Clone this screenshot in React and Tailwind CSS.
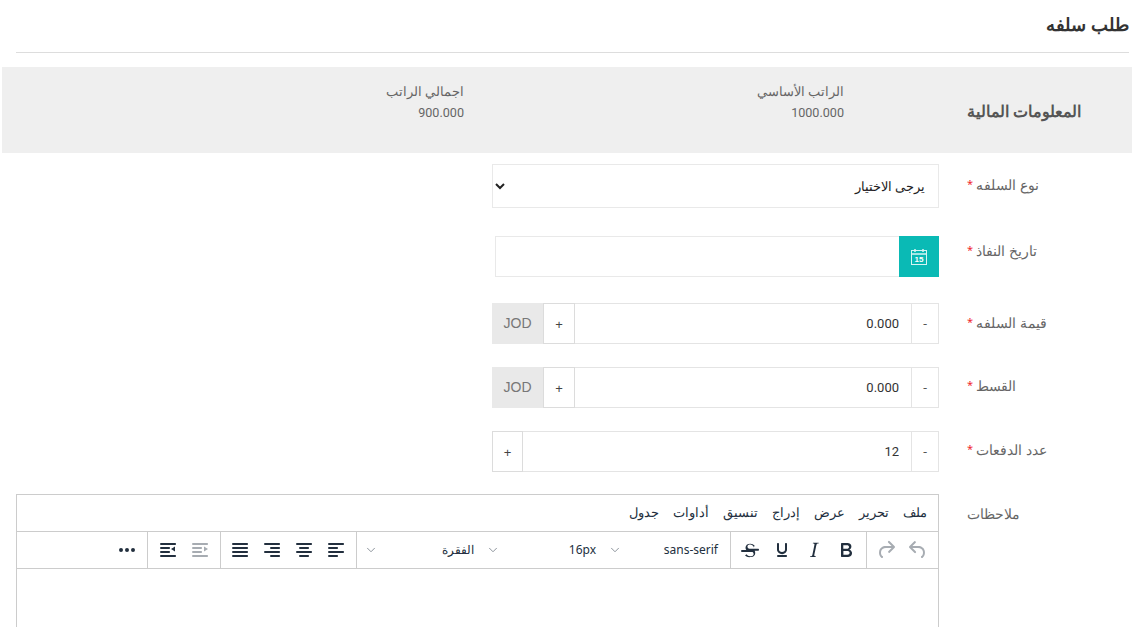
import { ChevronDown } from "lucide-react";

const FONT = "font-['Noto_Sans','Liberation_Sans',sans-serif]";

const ICONS = {
  undo: "M6.4 8H12c3.7 0 6.2 2 6.8 5.1.6 2.7-.4 5.6-2.3 6.8a1 1 0 0 1-1-1.8c1.1-.6 1.8-2.7 1.4-4.6-.5-2.1-2.1-3.5-4.9-3.5H6.4l3.3 3.3a1 1 0 1 1-1.4 1.4l-5-5a1 1 0 0 1 0-1.4l5-5a1 1 0 0 1 1.4 1.4L6.4 8z",
  redo: "M17.6 10H12c-2.8 0-4.4 1.4-4.9 3.5-.4 2 .3 4 1.4 4.6a1 1 0 1 1-1 1.8c-2-1.2-2.9-4.1-2.3-6.8.6-3 3-5.1 6.8-5.1h5.6l-3.3-3.3a1 1 0 1 1 1.4-1.4l5 5a1 1 0 0 1 0 1.4l-5 5a1 1 0 0 1-1.4-1.4l3.3-3.3z",
  bold: "M7.8 19c-.3 0-.5 0-.6-.2l-.2-.5V5.7c0-.2 0-.4.2-.5l.6-.2h5c1.5 0 2.7.3 3.5 1 .7.6 1.1 1.4 1.1 2.5a3 3 0 0 1-.6 1.9c-.4.6-1 1-1.6 1.2.4.1.9.3 1.3.6s.8.7 1 1.2c.4.4.5 1 .5 1.6 0 1.3-.4 2.3-1.3 3-.8.7-2.1 1-3.8 1H7.8zm5-8.3c.6 0 1.2-.1 1.6-.5.4-.3.6-.7.6-1.3 0-1.1-.8-1.7-2.3-1.7H9.3v3.5h3.4zm.5 6c.7 0 1.3-.1 1.7-.4.4-.4.6-.9.6-1.5s-.2-1-.7-1.4c-.4-.3-1-.4-2-.4H9.4v3.8h4z",
  italic: "M16.7 4.7l-.1.9h-.3c-.6 0-1 0-1.4.3-.3.3-.4.6-.5 1.1l-2.1 9.8v.6c0 .5.4.8 1.4.8h.2l-.2.8H8l.2-.8h.2c1.1 0 1.8-.5 2-1.5l2-9.8.1-.5c0-.6-.4-.8-1.4-.8h-.3l.2-.9h5.8z",
  underline: "M16 5c.6 0 1 .4 1 1v5.5a4 4 0 0 1-.4 1.8l-1 1.4a5.3 5.3 0 0 1-5.5 1 5 5 0 0 1-1.6-1c-.5-.4-.8-.9-1.1-1.4a4 4 0 0 1-.4-1.8V6c0-.6.4-1 1-1s1 .4 1 1v5.5c0 .3 0 .6.2 1l.6.7a3.3 3.3 0 0 0 2.2.8 3.4 3.4 0 0 0 2.2-.8c.3-.2.4-.5.6-.8l.2-.9V6c0-.6.4-1 1-1zM8 17h8c.6 0 1 .4 1 1s-.4 1-1 1H8a1 1 0 0 1 0-2z",
  strike: "M15.6 8.5c-.5-.7-1-1.1-1.3-1.3-.6-.4-1.3-.6-2-.6-2.7 0-2.8 1.7-2.8 2.1 0 1.2 1 1.8 2 2.1H20c.6 0 1 .4 1 1s-.4 1-1 1h-3.4c.5.7.6 1.5.6 2.2 0 1.4-.7 4.1-5 4.1A6.2 6.2 0 0 1 7 17.4l1.5-1.1c.4.6 1.6 2 3.7 2 1.6 0 2.5-.4 3-1 .3-.4.4-.9.4-1.4 0-.9-.5-1.500-1.200-1.900H4a1 1 0 0 1 0-2h4.300c-.5-.6-.8-1.300-.8-2.200 0-2.500 1.900-4.100 4.800-4.100 1.800 0 3.300.9 4.400 2.100l-1.100 1.700z",
  alignLeft: "M5 5h14c.6 0 1 .4 1 1s-.4 1-1 1H5a1 1 0 1 1 0-2zm0 4h8c.6 0 1 .4 1 1s-.4 1-1 1H5a1 1 0 1 1 0-2zm0 8h8c.6 0 1 .4 1 1s-.4 1-1 1H5a1 1 0 0 1 0-2zm0-4h14c.6 0 1 .4 1 1s-.4 1-1 1H5a1 1 0 0 1 0-2z",
  alignCenter: "M5 5h14c.6 0 1 .4 1 1s-.4 1-1 1H5a1 1 0 1 1 0-2zm3 4h8c.6 0 1 .4 1 1s-.4 1-1 1H8a1 1 0 1 1 0-2zm0 8h8c.6 0 1 .4 1 1s-.4 1-1 1H8a1 1 0 0 1 0-2zm-3-4h14c.6 0 1 .4 1 1s-.4 1-1 1H5a1 1 0 0 1 0-2z",
  alignRight: "M5 5h14c.6 0 1 .4 1 1s-.4 1-1 1H5a1 1 0 1 1 0-2zm6 4h8c.6 0 1 .4 1 1s-.4 1-1 1h-8a1 1 0 0 1 0-2zm0 8h8c.6 0 1 .4 1 1s-.4 1-1 1h-8a1 1 0 0 1 0-2zm-6-4h14c.6 0 1 .4 1 1s-.4 1-1 1H5a1 1 0 0 1 0-2z",
  justify: "M5 5h14c.6 0 1 .4 1 1s-.4 1-1 1H5a1 1 0 1 1 0-2zm0 4h14c.6 0 1 .4 1 1s-.4 1-1 1H5a1 1 0 1 1 0-2zm0 4h14c.6 0 1 .4 1 1s-.4 1-1 1H5a1 1 0 0 1 0-2zm0 4h14c.6 0 1 .4 1 1s-.4 1-1 1H5a1 1 0 0 1 0-2z",
  outdentRtl: "M5 5h14c.6 0 1 .4 1 1s-.4 1-1 1H5a1 1 0 1 1 0-2zm0 4h8c.6 0 1 .4 1 1s-.4 1-1 1H5a1 1 0 1 1 0-2zm0 4h8c.6 0 1 .4 1 1s-.4 1-1 1H5a1 1 0 0 1 0-2zm0 4h14c.6 0 1 .4 1 1s-.4 1-1 1H5a1 1 0 0 1 0-2zm10-6l4-2.500v5l-4-2.500z",
  indentRtl: "M5 5h14c.6 0 1 .4 1 1s-.4 1-1 1H5a1 1 0 1 1 0-2zm0 4h8c.6 0 1 .4 1 1s-.4 1-1 1H5a1 1 0 1 1 0-2zm0 4h8c.6 0 1 .4 1 1s-.4 1-1 1H5a1 1 0 0 1 0-2zm0 4h14c.6 0 1 .4 1 1s-.4 1-1 1H5a1 1 0 0 1 0-2zm15-6l-4-2.500v5l4-2.500z",
  more: "M6 10a2 2 0 1 1 0 4 2 2 0 0 1 0-4zm6 0a2 2 0 1 1 0 4 2 2 0 0 1 0-4zm6 0a2 2 0 1 1 0 4 2 2 0 0 1 0-4z",
};

const ToolIcon = ({ name, muted }) => (
  <button className="w-8 h-9 flex items-center justify-center shrink-0">
    <svg width="24" height="24" viewBox="0 0 24 24">
      <path d={ICONS[name]} fill={muted ? "#a7acb2" : "#222f3e"} />
    </svg>
  </button>
);

const ToolSelect = ({ label }) => (
  <div className="w-[122px] h-9 flex items-center justify-between pr-2 pl-1 text-[12px] text-[#222f3e]">
    <span>{label}</span>
    <ChevronDown size={14} strokeWidth={1.5} color="#7d858e" />
  </div>
);

const Label = ({ text, required, className }) => (
  <div className={`w-[165px] shrink-0 text-left text-[14.2px] text-[#666] ${className}`}>
    {text}
    {required && <span className="text-[#f0282d] text-[11px] align-[2px]"> *</span>}
  </div>
);

const NumberField = ({ value, suffix }) => (
  <div className="flex w-[447px] h-[41px] text-[#555]">
    <div className="w-[28px] border border-[#e4e4e4] flex items-center justify-center text-[13px]">-</div>
    <input
      readOnly
      value={value}
      className="flex-1 min-w-0 border-y border-y-[#e4e4e4] pt-[1px] px-3 text-[13px] text-[#333] text-right outline-none font-['Roboto',sans-serif]"
    />
    <div className={`border border-[#dcdcdc] flex items-center justify-center text-[13px] text-[#444] pt-0.5 font-['Liberation_Sans',sans-serif] ${suffix ? "w-[32px]" : "w-[31px]"}`}>+</div>
    {suffix && (
      <div className="w-[51px] bg-[#e9e9e9] flex items-center justify-center text-[14px] text-[#777] font-['Liberation_Sans',sans-serif]">
        {suffix}
      </div>
    )}
  </div>
);

function CalendarIcon() {
  return (
    <svg width="18" height="18" viewBox="0 0 18 18" fill="none" stroke="#d7f5f3" strokeWidth="1">
      <rect x="1.500" y="2.500" width="15" height="14" />
      <path d="M1.500 6h15M5 1v3M13 1v3" strokeWidth="1.500" />
      <text x="9" y="14" textAnchor="middle" fontSize="8" fontWeight="700" fill="#fff" stroke="none" fontFamily="Liberation Sans">15</text>
    </svg>
  );
}

export default function App() {
  return (
    <div dir="rtl" className={`w-[1132px] h-[627px] overflow-hidden bg-white ${FONT}`}>
      {/* Title */}
      <div className="mr-[3px] ml-4 h-[53px] border-b border-[#ddd] flex items-center">
        <h1 className="text-[18px] font-semibold text-[#333] pb-[3px]">طلب سلفه</h1>
      </div>

      {/* Financial info */}
      <div className="mt-[14px] ml-[2px] h-[86px] bg-[#efefef] flex">
        <div className="w-[165px] shrink-0 text-left text-[15.6px] font-semibold text-[#555] pt-[33px]">
          المعلومات المالية
        </div>
        <div className="w-[123px] shrink-0" />
        <div className="w-[380px] shrink-0 pt-[14px] text-[12.5px] text-[#666] leading-[21px]">
          <div>الراتب الأساسي</div>
          <div className="font-['Roboto',sans-serif] text-[12.6px]">1000.000</div>
        </div>
        <div className="pt-[14px] text-[12.5px] text-[#666] leading-[21px]">
          <div>اجمالي الراتب</div>
          <div className="font-['Roboto',sans-serif] text-[12.6px]">900.000</div>
        </div>
      </div>

      {/* Form */}
      <div className="pt-[11px]">
        <div className="flex gap-[28px]">
          <Label text="نوع السلفه" required className="pt-[10px]" />
          <select className="w-[447px] h-[44px] border border-[#e9e9e9] bg-white pr-[9px] pl-[6px] text-[12.8px] text-[#222]">
            <option>يرجى الاختيار</option>
          </select>
        </div>

        <div className="flex gap-[28px] mt-[28px]">
          <Label text="تاريخ النفاذ" required className="pt-[4px]" />
          <div className="flex w-[444px] h-[41px]">
            <button className="w-[40px] bg-[#0abab5] flex items-center justify-center">
              <CalendarIcon />
            </button>
            <div className="flex-1 border-y border-l border-[#e9e9e9]" />
          </div>
        </div>

        <div className="flex gap-[28px] mt-[26px]">
          <Label text="قيمة السلفه" required className="pt-[9px]" />
          <NumberField value="0.000" suffix="JOD" />
        </div>

        <div className="flex gap-[28px] mt-[23px]">
          <Label text="القسط" required className="pt-[8px]" />
          <NumberField value="0.000" suffix="JOD" />
        </div>

        <div className="flex gap-[28px] mt-[23px]">
          <Label text="عدد الدفعات" required className="pt-[8px]" />
          <NumberField value="12" />
        </div>

        <div className="flex gap-[28px] mt-[22px]">
          <Label text="ملاحظات" className="pt-[9px]" />
          <div className="w-[923px] h-[200px] border border-[#ccc] text-[#222f3e]">
            <div className="h-[37px] flex items-center gap-[14px] px-[11px] text-[12.6px] border-b border-[#ccc]">
              {["ملف", "تحرير", "عرض", "إدراج", "تنسيق", "أداوات", "جدول"].map((m) => (
                <span key={m}>{m}</span>
              ))}
            </div>
            <div className="h-[37px] flex border-b border-[#ccc]">
              <div className="flex pr-1 pl-[3px] border-l border-[#ccc] shrink-0">
                <ToolIcon name="undo" muted />
                <ToolIcon name="redo" muted />
              </div>
              <div className="flex pr-1 pl-[3px] border-l border-[#ccc] shrink-0">
                <ToolIcon name="bold" />
                <ToolIcon name="italic" />
                <ToolIcon name="underline" />
                <ToolIcon name="strike" />
              </div>
              <div className="flex pr-1 pl-[3px] border-l border-[#ccc] shrink-0">
                <ToolSelect label="sans-serif" />
                <ToolSelect label="16px" />
                <ToolSelect label="الفقرة" />
              </div>
              <div className="flex pr-1 pl-[3px] border-l border-[#ccc] shrink-0">
                <ToolIcon name="alignLeft" />
                <ToolIcon name="alignCenter" />
                <ToolIcon name="alignRight" />
                <ToolIcon name="justify" />
              </div>
              <div className="flex px-1 border-l border-[#ccc] shrink-0">
                <ToolIcon name="indentRtl" muted />
                <ToolIcon name="outdentRtl" />
              </div>
              <div className="flex px-1 shrink-0">
                <ToolIcon name="more" />
              </div>
            </div>
          </div>
        </div>
      </div>
    </div>
  );
}
